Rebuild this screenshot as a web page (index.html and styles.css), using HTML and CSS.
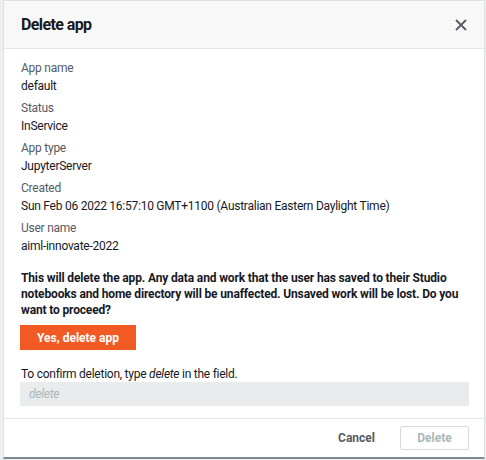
FILE: index.html
```html
<!DOCTYPE html>
<html>
<head>
<meta charset="utf-8">
<link rel="stylesheet" href="styles.css">
</head>
<body>
<div class="modal">
  <div class="header">
    <h2 class="title">Delete app</h2>
    <button class="close" aria-label="Close">
      <svg width="12" height="12" viewBox="0 0 12 12"><path d="M1 1 L11 11 M11 1 L1 11" stroke="#545b64" stroke-width="1.8" fill="none"/></svg>
    </button>
  </div>
  <div class="body">
    <dl class="details">
      <div class="item"><dt>App name</dt><dd>default</dd></div>
      <div class="item"><dt>Status</dt><dd>InService</dd></div>
      <div class="item"><dt>App type</dt><dd>JupyterServer</dd></div>
      <div class="item"><dt>Created</dt><dd>Sun Feb 06 2022 16:57:10 GMT+1100 (Australian Eastern Daylight Time)</dd></div>
      <div class="item"><dt>User name</dt><dd>aiml-innovate-2022</dd></div>
    </dl>
    <p class="warning">This will delete the app. Any data and work that the user has saved to their Studio notebooks and home directory will be unaffected. Unsaved work will be lost. Do you want to proceed?</p>
    <button class="btn-primary">Yes, delete app</button>
    <p class="confirm">To confirm deletion, type <em>delete</em> in the field.</p>
    <div class="input">delete</div>
  </div>
  <div class="footer">
    <button class="btn-link">Cancel</button>
    <button class="btn-disabled">Delete</button>
  </div>
</div>
</body>
</html>
```
FILE: styles.css
```css
* { box-sizing: border-box; }
html, body {
  margin: 0;
  padding: 0;
  background: #eef0f0;
  font-family: "Roboto", "Liberation Sans", sans-serif;
  color: #16191f;
  letter-spacing: -0.25px;
}
.modal {
  margin: 0 1px 0 3px;
  background: #fff;
  border: 1px solid #dfe3e3;
  border-bottom: 2px solid #7f8a95;
  height: 459px;
  display: flex;
  flex-direction: column;
}
.header {
  height: 48px;
  background: #f8f8f8;
  border-bottom: 1px solid #e3e6e6;
  display: flex;
  align-items: center;
  justify-content: space-between;
  padding: 0 16px 0 17px;
}
.title {
  margin: 0;
  font-size: 16px;
  font-weight: 700;
  letter-spacing: -0.6px;
  color: #16191f;
}
.close {
  background: none;
  border: 0;
  padding: 0;
  width: 14px;
  height: 14px;
  display: flex;
  align-items: center;
  justify-content: center;
}
.body {
  flex: 1;
  padding: 10px 15px 0 16px;
  border-bottom: 1px solid #e3e6e6;
}
.details {
  margin: 0;
  display: flex;
  flex-direction: column;
  gap: 4px;
}
.item dt {
  font-size: 12px;
  line-height: 18px;
  color: #545b64;
  padding-left: 1px;
}
.item dd {
  margin: 0;
  font-size: 12px;
  line-height: 18px;
  color: #16191f;
  padding-left: 1px;
}
.warning {
  margin: 15px 0 0;
  font-size: 12px;
  line-height: 16px;
  font-weight: 700;
  letter-spacing: -0.15px;
  padding-left: 1px;
}
.btn-primary {
  margin-top: 7px;
  height: 25px;
  width: 116px;
  background: #f15a22;
  border: 0;
  color: #fff;
  font-family: inherit;
  font-size: 12px;
  font-weight: 700;
  letter-spacing: 0;
  padding: 0;
}
.confirm {
  margin: 16px 0 0;
  font-size: 12px;
  line-height: 16px;
  padding-left: 1px;
}
.input {
  height: 24px;
  background: #e9ebed;
  color: #aab7b8;
  font-style: italic;
  font-size: 12px;
  line-height: 24px;
  padding-left: 9px;
}
.footer {
  height: 38px;
  display: flex;
  align-items: center;
  justify-content: flex-end;
  padding: 0 15px 0 16px;
  gap: 25px;
}
.btn-link {
  background: none;
  border: 0;
  font-family: inherit;
  font-size: 12px;
  font-weight: 700;
  letter-spacing: 0;
  color: #545b64;
  padding: 0;
}
.btn-disabled {
  width: 69px;
  height: 24px;
  background: #fff;
  border: 1px solid #d5dbdb;
  border-radius: 2px;
  font-family: inherit;
  font-size: 12px;
  font-weight: 700;
  letter-spacing: 0;
  color: #aab7b8;
  padding: 0;
}
```
